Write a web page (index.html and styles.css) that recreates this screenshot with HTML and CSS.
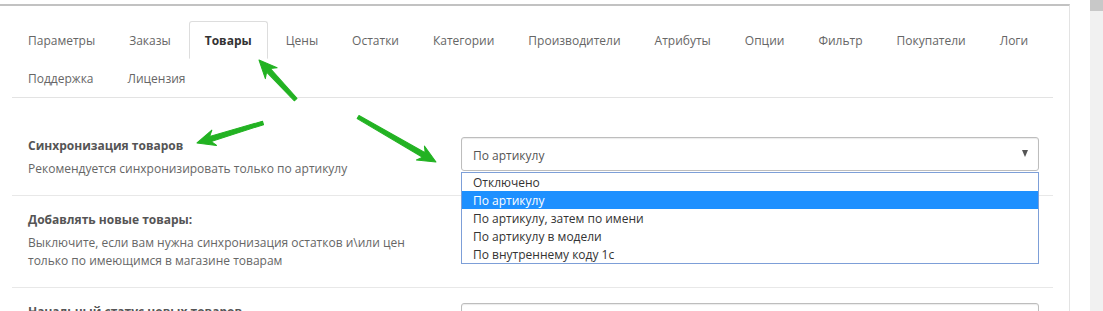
FILE: index.html
```html
<!DOCTYPE html>
<html lang="ru">
<head>
    <meta charset="UTF-8">
    <title>Настройки обмена - Товары</title>
    <link rel="stylesheet" href="styles.css">
</head>
<body>
    <div class="page">
        <div class="panel">
            <ul class="nav-tabs">
                <li><a href="#">Параметры</a></li>
                <li><a href="#">Заказы</a></li>
                <li class="active"><a href="#">Товары</a></li>
                <li><a href="#">Цены</a></li>
                <li><a href="#">Остатки</a></li>
                <li><a href="#">Категории</a></li>
                <li><a href="#">Производители</a></li>
                <li><a href="#">Атрибуты</a></li>
                <li><a href="#">Опции</a></li>
                <li><a href="#">Фильтр</a></li>
                <li><a href="#">Покупатели</a></li>
                <li><a href="#">Логи</a></li>
                <li><a href="#">Поддержка</a></li>
                <li><a href="#">Лицензия</a></li>
            </ul>

            <div class="tab-content">
                <div class="form-row">
                    <div class="form-label">
                        <div class="label-title">Синхронизация товаров</div>
                        <div class="label-help">Рекомендуется синхронизировать только по артикулу</div>
                    </div>
                    <div class="select-wrap">
                        <div class="select">
                            <span>По артикулу</span>
                            <span class="caret"></span>
                        </div>
                        <ul class="select-list">
                            <li>Отключено</li>
                            <li class="selected">По артикулу</li>
                            <li>По артикулу, затем по имени</li>
                            <li>По артикулу в модели</li>
                            <li>По внутреннему коду 1с</li>
                        </ul>
                    </div>
                </div>

                <div class="form-row">
                    <div class="form-label">
                        <div class="label-title">Добавлять новые товары:</div>
                        <div class="label-help">Выключите, если вам нужна синхронизация остатков и\или цен только по имеющимся в магазине товарам</div>
                    </div>
                    <div class="select-wrap">
                        <!-- hidden under the open list above -->
                        <div class="select">
                            <span class="caret"></span>
                        </div>
                    </div>
                </div>

                <div class="form-row">
                    <div class="form-label">
                        <div class="label-title">Начальный статус новых товаров</div>
                    </div>
                    <div class="select-wrap">
                        <div class="select">
                            <span>Включено</span>
                            <span class="caret"></span>
                        </div>
                    </div>
                </div>
            </div>
        </div>

        <div class="scrollbar">
            <div class="scroll-thumb"></div>
        </div>
    </div>

    <!-- pointer arrows drawn on top of the screenshot -->
    <svg class="arrows" width="1103" height="311" viewBox="0 0 1103 311">
        <path transform="translate(259 60) rotate(-132.8)" d="M0 0 L-18 -8 L-14 -2.6 L-54 -1.8 L-54 1.8 L-14 2.6 L-18 8 Z"/>
        <path transform="translate(197 143) rotate(163.1)" d="M0 0 L-18 -8 L-14 -2.6 L-69 -1.8 L-69 1.8 L-14 2.6 L-18 8 Z"/>
        <path transform="translate(436 162) rotate(30)" d="M0 0 L-18 -8 L-14 -2.6 L-90 -1.8 L-90 1.8 L-14 2.6 L-18 8 Z"/>
    </svg>
</body>
</html>
```

FILE: styles.css
```css
* {
    margin: 0;
    padding: 0;
    box-sizing: border-box;
}

body {
    font-family: 'Open Sans', 'Liberation Sans', Arial, sans-serif;
    font-size: 12px;
    line-height: 18px;
    color: #666;
    background: white;
    overflow: hidden;
    position: relative;
    height: 311px;
}

.page {
    display: flex;
    gap: 20px;
    height: 100%;
}

.panel {
    width: 1070px;
    margin-top: 4px;
    border-top: 2px solid #c2c2c2;
    border-right: 1px solid #e3e3e3;
    padding: 15px 16px 0 12px;
}

.scrollbar {
    width: 13px;
    background: #f1f1f1;
}

.scroll-thumb {
    height: 11px;
    background: #c8c8c8;
}

/* tabs */

.nav-tabs {
    list-style: none;
    display: flex;
    flex-wrap: wrap;
    border-bottom: 1px solid #e3e3e3;
}

.nav-tabs li a {
    display: block;
    padding: 10px 15px 8px;
    margin-right: 2px;
    border: 1px solid transparent;
    border-radius: 3px 3px 0 0;
    color: #666;
    text-decoration: none;
}

.nav-tabs li.active a {
    border-color: #ddd #ddd transparent;
    color: #333;
    font-weight: bold;
}

/* form */

.tab-content {
    padding-top: 24px;
}

.form-row {
    display: grid;
    grid-template-columns: 433px 578px;
    align-items: start;
    padding: 15px 0 17px 16px;
    border-bottom: 1px solid #e8e8e8;
}

.form-label {
    padding-right: 15px;
}

.label-title {
    font-weight: bold;
    color: #555;
    margin-bottom: 5px;
}

.label-help {
    color: #666;
}

.select-wrap {
    position: relative;
}

.select {
    height: 34px;
    border: 1px solid #bdbdbd;
    border-radius: 3px;
    box-shadow: inset 0 1px 1px rgba(0,0,0,0.08);
    padding: 3px 11px 0;
    display: flex;
    align-items: center;
    justify-content: space-between;
    color: #555;
    background: white;
}

.caret {
    width: 0;
    height: 0;
    margin-left: auto;
    border-left: 3.5px solid transparent;
    border-right: 3.5px solid transparent;
    border-top: 7px solid #555;
    margin-right: -1px;
    margin-bottom: 4px;
}

.select-list {
    position: absolute;
    top: calc(100% + 1px);
    left: 0;
    right: 0;
    list-style: none;
    border: 1px solid #7d9fd8;
    background: white;
    z-index: 2;
}

.select-list li {
    height: 18px;
    line-height: 16px;
    padding: 2px 0 0 11px;
    color: #333;
}

.select-list li.selected {
    background: #1e90ff;
    color: white;
}

.arrows {
    position: absolute;
    top: 0;
    left: 0;
    pointer-events: none;
    z-index: 5;
}

.arrows path {
    fill: #22b222;
    stroke: #22b222;
    stroke-width: 1;
    stroke-linejoin: round;
}
```
